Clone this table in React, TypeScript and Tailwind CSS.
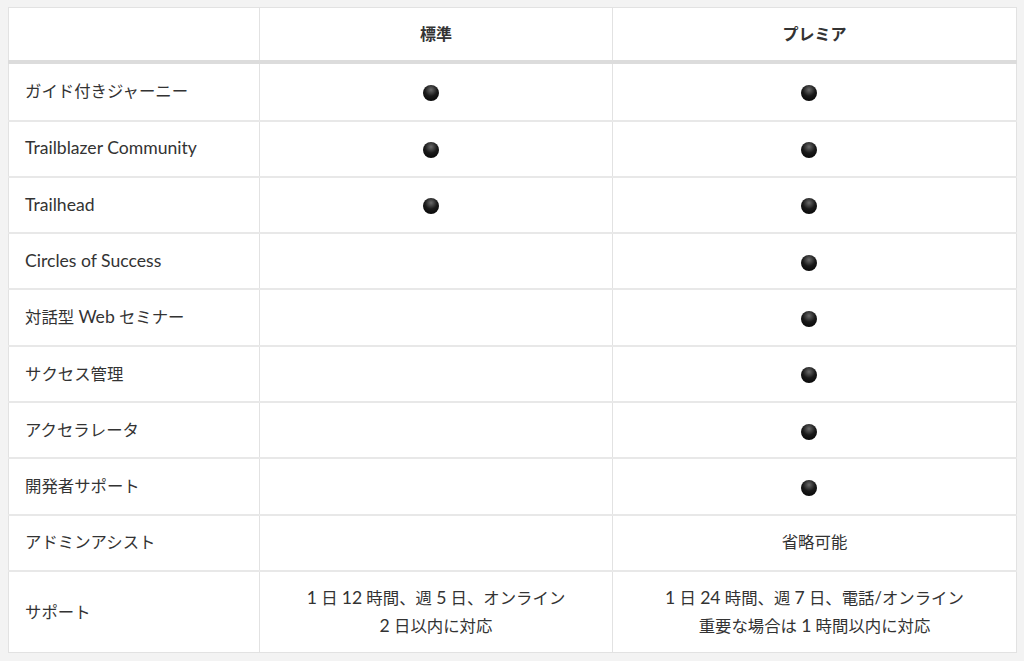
import React from 'react';

const rows: { label: string; std: boolean | string; pre: boolean | string }[] = [
  { label: 'ガイド付きジャーニー', std: true, pre: true },
  { label: 'Trailblazer Community', std: true, pre: true },
  { label: 'Trailhead', std: true, pre: true },
  { label: 'Circles of Success', std: false, pre: true },
  { label: '対話型 Web セミナー', std: false, pre: true },
  { label: 'サクセス管理', std: false, pre: true },
  { label: 'アクセラレータ', std: false, pre: true },
  { label: '開発者サポート', std: false, pre: true },
  { label: 'アドミンアシスト', std: false, pre: '省略可能' },
];

// latin runs render a touch larger so their width matches the original font
const Txt = ({ text }: { text: string }) => (
  <>
    {text.split(/([A-Za-z0-9/]+(?: [A-Za-z0-9/]+)*)/).map((part, i) =>
      /[A-Za-z0-9]/.test(part) ? (
        <span key={i} className="text-[17.6px]">
          {part}
        </span>
      ) : (
        <React.Fragment key={i}>{part}</React.Fragment>
      )
    )}
  </>
);

const Dot = () => (
  <span className="inline-block w-4 h-4 rounded-full mr-[11px] align-middle bg-[radial-gradient(circle_at_50%_30%,#6a6a6a_0%,#1a1a1a_45%,#000_100%)]" />
);

const Cell = ({ value }: { value: boolean | string }) => {
  if (value === true) return <Dot />;
  if (typeof value === 'string') return <span>{value}</span>;
  return null;
};

export default function App() {
  return (
    <div
      className="min-h-[661px] bg-[#f3f3f3] pt-[7px] pl-2 text-[#333] text-[16.4px]"
      style={{ fontFamily: 'Lato, "Noto Sans CJK JP", sans-serif' }}
    >
      <table className="w-[1009px] bg-white border-collapse border border-[#e2e2e2]">
        <thead>
          <tr className="h-[54px] border-b-4 border-[#dcdcdc]">
            <th className="w-[251px] border-r border-[#e2e2e2]" />
            <th className="w-[353px] border-r border-[#e2e2e2] font-bold text-[16px] text-[#333]">標準</th>
            <th className="font-bold text-[16px] text-[#333]">プレミア</th>
          </tr>
        </thead>
        <tbody>
          {rows.map((r, i) => (
            <tr
              key={r.label}
              className={`${i === 0 ? 'h-[59px]' : 'h-[56.3px]'} border-b-2 border-[#e8e8e8]`}
            >
              <td className="pl-4 border-r border-[#e2e2e2]">
                <Txt text={r.label} />
              </td>
              <td className="text-center border-r border-[#e2e2e2]">
                <Cell value={r.std} />
              </td>
              <td className="text-center">
                <Cell value={r.pre} />
              </td>
            </tr>
          ))}
          <tr className="h-[82px]">
            <td className="pl-4 border-r border-[#e2e2e2]">サポート</td>
            <td className="text-center border-r border-[#e2e2e2] leading-[28px]">
              <Txt text="1 日 12 時間、週 5 日、オンライン" />
              <br />
              <Txt text="2 日以内に対応" />
            </td>
            <td className="text-center leading-[28px]">
              <Txt text="1 日 24 時間、週 7 日、電話/オンライン" />
              <br />
              <Txt text="重要な場合は 1 時間以内に対応" />
            </td>
          </tr>
        </tbody>
      </table>
    </div>
  );
}
